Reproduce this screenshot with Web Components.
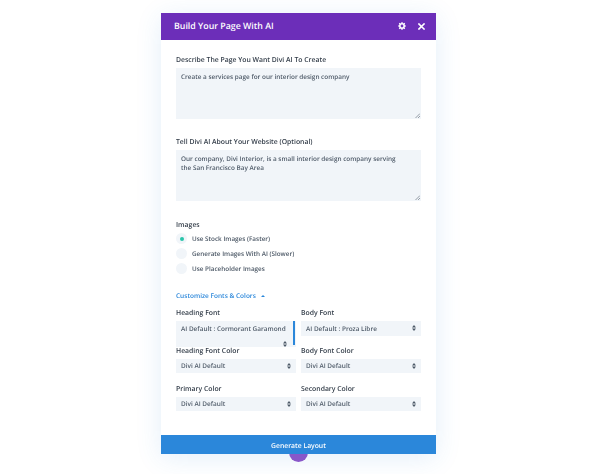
<!DOCTYPE html>
<html lang="en">
<head>
<meta charset="utf-8">
<title>Build Your Page With AI</title>
<style>
  html, body { margin: 0; height: 100%; background: #fff; }
  body {
    font-family: "Open Sans", "Liberation Sans", sans-serif;
    text-rendering: geometricPrecision;
    overflow: hidden;
  }
</style>
</head>
<body>
<ai-modal heading="Build Your Page With AI" action="Generate Layout">
  <ai-field label="Describe The Page You Want Divi AI To Create">
    <ai-textarea>Create a services page for our interior design company</ai-textarea>
  </ai-field>
  <ai-field label="Tell Divi AI About Your Website (Optional)" style="margin-top:17px">
    <ai-textarea>Our company, Divi Interior, is a small interior design company serving<br>the San Francisco Bay Area</ai-textarea>
  </ai-field>
  <ai-field label="Images" style="margin-top:18px; --label-gap:-1px">
    <ai-radio checked>Use Stock Images (Faster)</ai-radio>
    <ai-radio>Generate Images With AI (Slower)</ai-radio>
    <ai-radio>Use Placeholder Images</ai-radio>
  </ai-field>
  <ai-toggle>Customize Fonts &amp; Colors</ai-toggle>
  <ai-grid>
    <ai-field label="Heading Font"><ai-select tall>AI Default : Cormorant Garamond</ai-select></ai-field>
    <ai-field label="Body Font"><ai-select first>AI Default : Proza Libre</ai-select></ai-field>
    <ai-field label="Heading Font Color"><ai-select>Divi AI Default</ai-select></ai-field>
    <ai-field label="Body Font Color"><ai-select>Divi AI Default</ai-select></ai-field>
    <ai-field label="Primary Color"><ai-select>Divi AI Default</ai-select></ai-field>
    <ai-field label="Secondary Color"><ai-select>Divi AI Default</ai-select></ai-field>
  </ai-grid>
</ai-modal>

<script>
"use strict";

(() => {
  customElements.define("ai-modal", class extends HTMLElement {
    constructor() {
      super();

      this.attachShadow({mode: "open"}).innerHTML = `
        <style>
          :host {
            display: block;
            position: relative;
            width: 275px;
            margin: 13px 0 0 161px;
            filter: blur(.25px);
          }

          #bubble {
            position: absolute;
            left: 128px;
            top: 430px;
            width: 19px;
            height: 19px;
            border-radius: 50%;
            background: #8f55c9;
          }

          #panel {
            position: relative;
            height: 441px;
            display: flex;
            flex-direction: column;
            background: #FFFFFF;
            box-shadow: 0px 4px 24px rgba(43, 135, 218, 0.13);
          }

          header {
            height: 27px;
            flex: none;
            box-sizing: border-box;
            padding: 0 11px 1px 13px;
            display: flex;
            align-items: center;
            background: #6c2eb9;
            color: #FFFFFF;
            font-size: 8.8px;
            font-weight: 600;
          }

          #title { flex: 1; }

          svg { display: block; }
          #gear { margin-right: 12px; }

          #body {
            flex: 1;
            min-height: 0;
            padding: 14px 15px 0 15px;
          }

          footer {
            height: 19px;
            flex: none;
            box-sizing: border-box;
            padding-top: 1px;
            display: flex;
            align-items: center;
            justify-content: center;
            background: #2b87da;
            color: #FFFFFF;
            font-size: 6.8px;
            font-weight: 600;
          }
        </style>
        <div id="bubble"></div>
        <div id="panel">
          <header>
            <div id="title"></div>
            <svg id="gear" width="8" height="8" viewBox="0 0 8 8" fill="none">
              <circle cx="4" cy="4" r="2.2" stroke="#fff" stroke-width="1.6"/>
              <path d="M4 0v1.5M4 6.5V8M0 4h1.5M6.5 4H8M1.2 1.2l1 1M5.8 5.8l1 1M6.8 1.2l-1 1M2.2 5.8l-1 1" stroke="#fff" stroke-width="1.1"/>
            </svg>
            <svg width="7" height="7" viewBox="0 0 7 7">
              <path d="M1 1l5 5M6 1L1 6" stroke="#fff" stroke-width="1.6" stroke-linecap="square"/>
            </svg>
          </header>
          <div id="body"><slot></slot></div>
          <footer id="action"></footer>
        </div>
      `;

      this.shadowRoot.getElementById("title").textContent = this.getAttribute("heading");
      this.shadowRoot.getElementById("action").textContent = this.getAttribute("action");
    }
  });

  customElements.define("ai-field", class extends HTMLElement {
    constructor() {
      super();

      this.attachShadow({mode: "open"}).innerHTML = `
        <style>
          :host { display: block; }

          #label {
            height: 13px;
            margin-bottom: var(--label-gap, 1px);
            font-size: 6.85px;
            line-height: 13px;
            font-weight: 600;
            color: #333d49;
          }
        </style>
        <div id="label"></div>
        <slot></slot>
      `;

      this.shadowRoot.getElementById("label").textContent = this.getAttribute("label");
    }
  });

  customElements.define("ai-textarea", class extends HTMLElement {
    constructor() {
      super();

      this.attachShadow({mode: "open"}).innerHTML = `
        <style>
          :host {
            display: block;
            position: relative;
            height: 51px;
            box-sizing: border-box;
            padding: 4px 5px;
            background: #f1f5f9;
            color: #4c5866;
            font-size: 6.4px;
            font-weight: 600;
            line-height: 9px;
          }

          /* own group, so the text is not drawn with coloured fringes */
          #text { opacity: .99; }

          svg { position: absolute; right: 1px; bottom: 1px; }
        </style>
        <div id="text"><slot></slot></div>
        <svg width="5" height="5" viewBox="0 0 5 5">
          <path d="M0.5 5L5 0.5M3 5L5 3" stroke="#7d8793" stroke-width=".8"/>
        </svg>
      `;
    }
  });

  customElements.define("ai-radio", class extends HTMLElement {
    constructor() {
      super();

      this.attachShadow({mode: "open"}).innerHTML = `
        <style>
          :host {
            display: flex;
            align-items: center;
            height: 15px;
            color: #4c5866;
            font-size: 6.35px;
            font-weight: 600;
          }

          #dot {
            width: 11px;
            height: 11px;
            margin-right: 5px;
            border-radius: 50%;
            background: #f1f5f9;
            display: flex;
            align-items: center;
            justify-content: center;
          }

          :host([checked]) #dot::after {
            content: "";
            width: 4px;
            height: 4px;
            border-radius: 50%;
            background: #29c4a9;
          }
        </style>
        <div id="dot"></div>
        <slot></slot>
      `;
    }
  });

  customElements.define("ai-toggle", class extends HTMLElement {
    constructor() {
      super();

      this.attachShadow({mode: "open"}).innerHTML = `
        <style>
          :host {
            display: flex;
            align-items: center;
            gap: 5px;
            height: 13px;
            margin-top: 13px;
            margin-bottom: 5px;
            color: #2b87da;
            font-size: 6.5px;
            font-weight: 600;
          }

          #arrow {
            border-left: 2px solid transparent;
            border-right: 2px solid transparent;
            border-bottom: 2.5px solid #2b87da;
          }
        </style>
        <slot></slot>
        <div id="arrow"></div>
      `;
    }
  });

  customElements.define("ai-grid", class extends HTMLElement {
    constructor() {
      super();

      this.attachShadow({mode: "open"}).innerHTML = `
        <style>
          :host {
            display: grid;
            grid-template-columns: 120px 120px;
            column-gap: 5px;
            row-gap: 10px;
            grid-auto-rows: min-content;
          }

          ::slotted(:nth-child(-n+2)) { height: 28px; }
        </style>
        <slot></slot>
      `;
    }
  });

  customElements.define("ai-select", class extends HTMLElement {
    constructor() {
      super();

      this.attachShadow({mode: "open"}).innerHTML = `
        <style>
          :host {
            display: flex;
            position: relative;
            align-items: center;
            height: 14px;
            box-sizing: border-box;
            padding: 0 5px 1px;
            background: #f1f5f9;
            color: #4c5866;
            font-size: 6.45px;
            font-weight: 600;
            white-space: nowrap;
          }

          :host([first]) { height: 15px; }

          :host([tall]) {
            height: 26px;
            align-items: flex-start;
            padding-top: 3px;
          }

          :host([tall])::after {
            content: "";
            position: absolute;
            right: 1px;
            top: 0;
            width: 2px;
            height: 24px;
            background: #2b87da;
          }

          #text { opacity: .99; }

          svg { position: absolute; right: 5px; top: 4px; }
          :host([tall]) svg { right: 9px; top: 20px; }
        </style>
        <div id="text"><slot></slot></div>
        <svg width="4" height="6" viewBox="0 0 4 6">
          <path d="M2 0L4 2.4H0zM2 6L0 3.6H4z" fill="#4c5866"/>
        </svg>
      `;
    }
  });
})();
</script>
</body>
</html>
